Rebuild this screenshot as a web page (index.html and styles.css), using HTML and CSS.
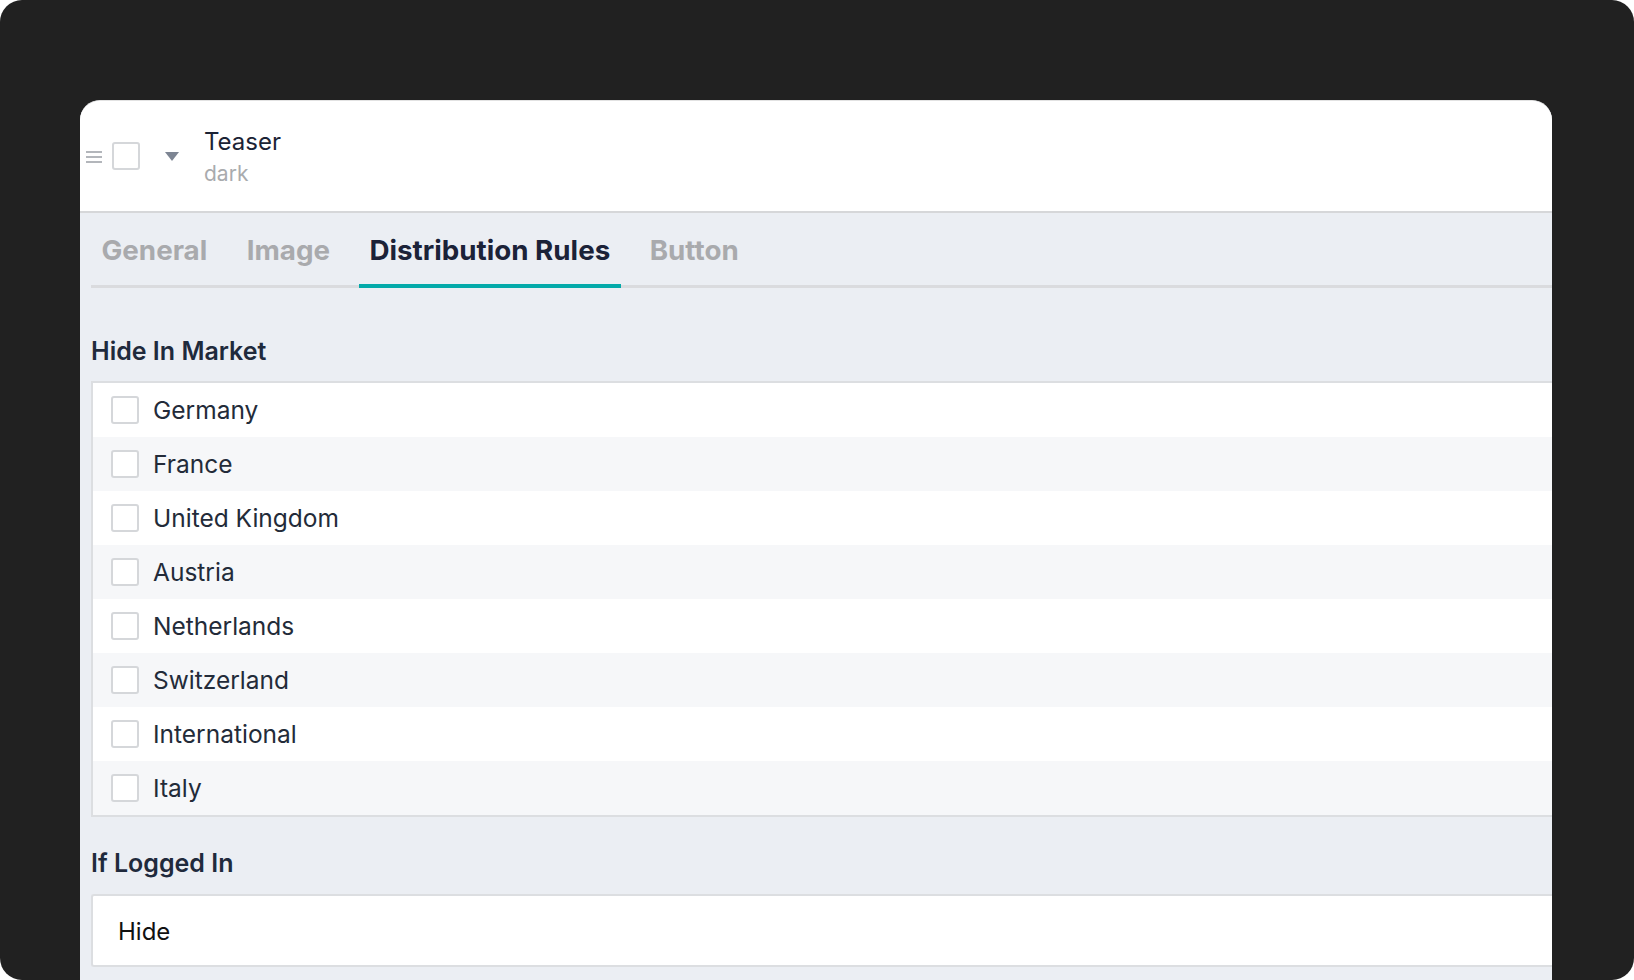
FILE: index.html
```html
<!DOCTYPE html>
<html lang="en">
<head>
<meta charset="utf-8">
<title>Teaser – Distribution Rules</title>
<link rel="stylesheet" href="styles.css">
</head>
<body>
<div class="frame">
  <div class="card">
    <header class="card-header">
      <span class="handle" aria-hidden="true"><i></i><i></i><i></i></span>
      <span class="checkbox"></span>
      <svg class="caret" width="14" height="9" viewBox="0 0 14 9" aria-hidden="true"><path d="M0 0 H14 L7 9 Z" fill="#7d8593"/></svg>
      <div class="titles">
        <div class="title">Teaser</div>
        <div class="subtitle">dark</div>
      </div>
    </header>
    <div class="body">
      <nav class="tabs">
        <span class="tab">General</span>
        <span class="tab">Image</span>
        <span class="tab active">Distribution Rules</span>
        <span class="tab">Button</span>
      </nav>
      <h3 class="label label-first">Hide In Market</h3>
      <ul class="options">
        <li class="option"><span class="checkbox"></span><span>Germany</span></li>
        <li class="option"><span class="checkbox"></span><span>France</span></li>
        <li class="option"><span class="checkbox"></span><span>United Kingdom</span></li>
        <li class="option"><span class="checkbox"></span><span>Austria</span></li>
        <li class="option"><span class="checkbox"></span><span>Netherlands</span></li>
        <li class="option"><span class="checkbox"></span><span>Switzerland</span></li>
        <li class="option"><span class="checkbox"></span><span>International</span></li>
        <li class="option"><span class="checkbox"></span><span>Italy</span></li>
      </ul>
      <h3 class="label label-second">If Logged In</h3>
      <div class="select">Hide</div>
    </div>
  </div>
</div>
</body>
</html>
```
FILE: styles.css
```css
* { box-sizing: border-box; }
html, body { margin: 0; padding: 0; background: #ffffff; }
body { font-family: Inter, "Noto Sans", "Liberation Sans", sans-serif; }

.frame {
  width: 1634px;
  height: 980px;
  background: #212121;
  border-radius: 22px;
  padding: 100px 0 0 80px;
  overflow: hidden;
}

.card {
  width: 1472px;
  height: 880px;
  background: #ebeef3;
  border-radius: 20px 20px 0 0;
  border-top: 1px solid #e2e2e2;
  overflow: hidden;
}

.card-header {
  height: 112px;
  background: #ffffff;
  border-bottom: 2px solid #d6d7d9;
  display: flex;
  align-items: center;
  padding-left: 6px;
}

.handle {
  width: 16px;
  display: flex;
  flex-direction: column;
  gap: 3px;
  margin-top: 2px;
}
.handle i {
  display: block;
  height: 2px;
  background: #b3b6bb;
}

.checkbox {
  flex: none;
  width: 28px;
  height: 28px;
  border: 2px solid #d5d7da;
  border-radius: 3px;
  background: #ffffff;
}
.card-header .checkbox { margin-left: 10px; }

.caret { margin-left: 25px; flex: none; }

.titles { margin-left: 25px; margin-top: 2px; }
.title {
  font-size: 24px;
  line-height: 30px;
  color: #1b2335;
}
.subtitle {
  font-size: 21px;
  line-height: 26px;
  color: #a9abae;
  margin-top: 4px;
}

.body {
  padding-left: 11px;
}

.tabs {
  display: flex;
  gap: 18.5px;
  border-bottom: 3px solid #dadbde;
  padding-top: 20px;
}
.tab {
  font-size: 27.75px;
  font-weight: 700;
  line-height: 34px;
  color: #a9aaad;
  padding: 0 10.5px 17px;
  margin-bottom: -3px;
  border-bottom: 4px solid transparent;
}
.tab.active {
  color: #1b2238;
  border-bottom-color: #03a9a9;
}

.label {
  margin: 0;
  font-size: 25px;
  font-weight: 600;
  line-height: 30px;
  color: #1f2a3c;
}
.label-first { margin-top: 48px; margin-bottom: 15px; }
.label-second { margin-top: 31px; margin-bottom: 16px; }

.options {
  list-style: none;
  margin: 0;
  padding: 0;
  border: 2px solid #dcdee1;
  border-right: none;
  background: #ffffff;
}
.option {
  height: 54px;
  display: flex;
  align-items: center;
  gap: 14px;
  padding-left: 18px;
  font-size: 24.5px;
  color: #232b39;
}
.option:nth-child(even) { background: #f6f7f9; }

.select {
  height: 73px;
  border: 2px solid #dcdee1;
  border-right: none;
  border-radius: 3px 0 0 3px;
  background: #ffffff;
  display: flex;
  align-items: center;
  padding-left: 25px;
  padding-top: 2px;
  font-size: 24px;
  color: #111111;
}
```
